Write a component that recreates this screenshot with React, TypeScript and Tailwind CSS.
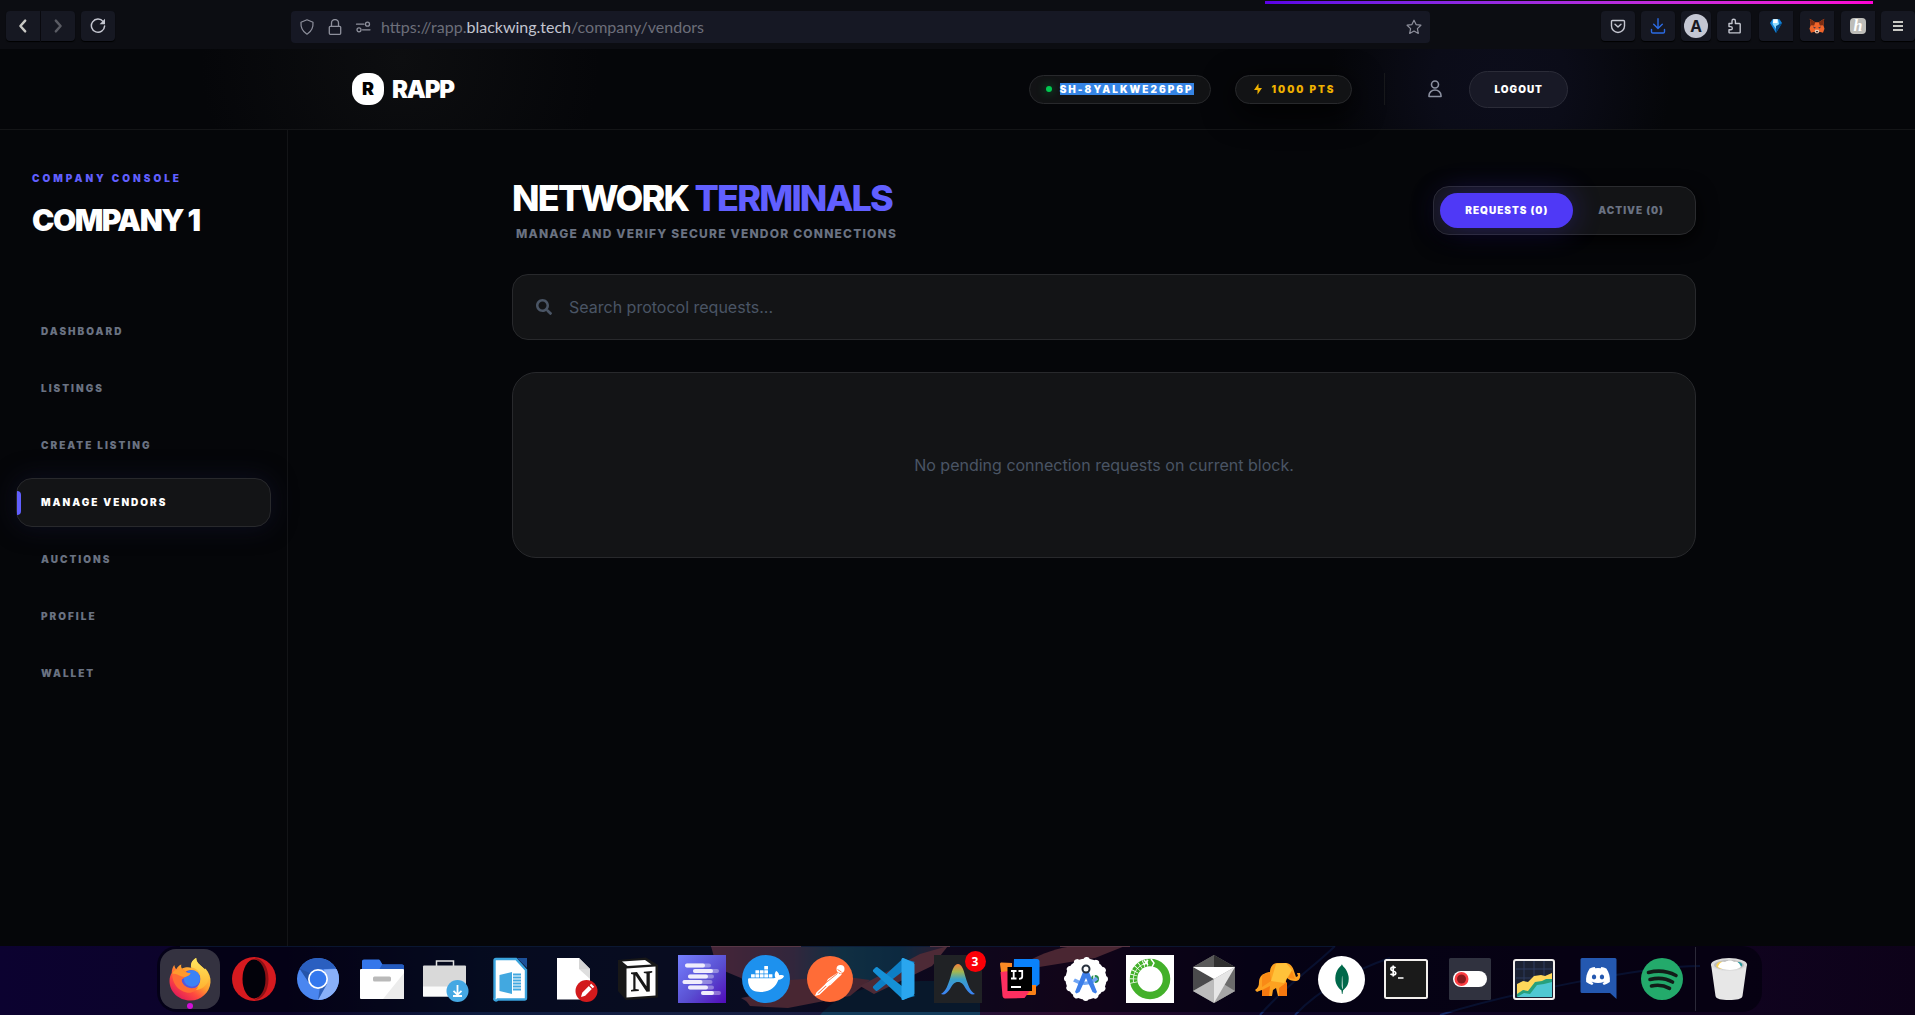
import type { ReactNode } from "react";
import { RiFlashlightFill } from "react-icons/ri";
import { FaDiscord, FaSearch } from "react-icons/fa";
import { SiDocker, SiMongodb } from "react-icons/si";

/* ---------- Browser toolbar ---------- */

function ToolButton({ label, className = "w-[34px] rounded", children }: { label: string; className?: string; children: ReactNode }) {
  return (
    <button
      type="button"
      aria-label={label}
      className={`flex h-[30px] shrink-0 items-center justify-center bg-[#161822] shadow-[0_1px_1px_#000] ${className}`}
    >
      {children}
    </button>
  );
}

function Line({ d, className, width = 1.4, size = "size-4" }: { d: string; className: string; width?: number; size?: string }) {
  return (
    <svg viewBox="0 0 16 16" className={`${size} shrink-0 ${className}`} fill="none" stroke="currentColor" strokeWidth={width} strokeLinecap="round" strokeLinejoin="round" aria-hidden="true">
      <path d={d} />
    </svg>
  );
}

function BrowserBar() {
  return (
    <div className="relative flex h-[49px] items-start bg-[#0c0d12] pt-[11px] pl-1.5">
      <div className="absolute top-px right-[42px] h-[3px] w-[608px] bg-linear-to-r from-[#5b00e6] to-[#ff00d4]" />
      <div className="flex gap-px">
        <ToolButton label="Back" className="w-[34px] rounded-l">
          <Line d="M10.2 2.6 5.4 8l4.8 5.4" width={2.4} className="text-[#c8c8c4]" />
        </ToolButton>
        <ToolButton label="Forward" className="w-[34px] rounded-r">
          <Line d="M5.8 2.6 10.6 8l-4.8 5.4" width={2.4} className="text-[#5a5c64]" />
        </ToolButton>
      </div>
      <div className="ml-1.5">
        <ToolButton label="Reload">
          <svg viewBox="0 0 16 16" className="size-4 text-[#c4c6d0]" fill="none" stroke="currentColor" strokeWidth="1.5" aria-hidden="true">
            <path d="M13.2 3.6A6.6 6.6 0 1 0 14.6 8" strokeLinecap="round" />
            <path d="M15 .8v5.4H9.6z" fill="currentColor" stroke="none" />
          </svg>
        </ToolButton>
      </div>
      <div className="ml-44 flex h-8 flex-1 items-center rounded bg-[#161824] px-2 text-[#8e909c]">
        <Line d="M8 .8 14 3.2c.4 4.6-1.2 9-6 12C3.200 12.200 1.600 7.800 2 3.200z" width={1.200} className="" />
        <svg viewBox="0 0 16 16" className="ml-3 size-4 shrink-0" fill="none" stroke="currentColor" strokeWidth="1.300" aria-hidden="true">
          <rect x="2.300" y="7.300" width="11.400" height="8" rx="1" />
          <path d="M4.500 7V4a3.500 3.500 0 0 1 7 0v3" />
        </svg>
        <svg viewBox="0 0 16 16" className="ml-3 size-4 shrink-0" fill="none" stroke="currentColor" strokeWidth="1.300" strokeLinecap="round" aria-hidden="true">
          <path d="M1.500 5.200h7.500M7.500 10.800H15" />
          <circle cx="12.500" cy="5.200" r="2" />
          <circle cx="4" cy="10.800" r="2" />
        </svg>
        <div
          role="textbox"
          aria-label="Address"
          tabIndex={0}
          className="ml-2.5 flex-1 font-[Lato,sans-serif] text-base leading-6 whitespace-nowrap text-[#6c6e79]"
        >
          https://rapp.<span className="text-[#c3c5d0]">blackwing.tech</span>/company/vendors
        </div>
        <button type="button" aria-label="Bookmark this page" className="text-[#8e909c]">
          <Line d="M8 1.200 10.100 5.600l4.800.6-3.500 3.400.9 4.800L8 12l-4.300 2.400.9-4.800L1.100 6.200l4.800-.6z" width={1.200} className="" />
        </button>
      </div>
      <div className="ml-[171px] flex items-start gap-1.5 text-[#c4c6d0]">
        <ToolButton label="Pocket">
          <Line d="M2.500 2.500h11a1 1 0 0 1 1 1V8a6.500 6.500 0 0 1-13 0V3.500a1 1 0 0 1 1-1zM5 6.200l3 2.900 3-2.900" className="" />
        </ToolButton>
        <ToolButton label="Downloads">
          <Line d="M8 .8v9.400M3.700 6.200 8 10.400l4.300-4.200M1.500 11.500v2.200c0 .9.400 1.300 1.300 1.300h10.400c.9 0 1.300-.4 1.300-1.300v-2.200" className="text-[#2b6be4]" />
        </ToolButton>
        <ToolButton label="Account" className="w-[30px] rounded">
          <span className="flex size-6 items-center justify-center rounded-full bg-[#c4c7d3] font-['Noto_Sans',sans-serif] text-base font-bold text-[#161822]">A</span>
        </ToolButton>
        <ToolButton label="Extensions">
          <Line d="M3 5.500h3V3a1.700 1.700 0 0 1 3.400 0v2.500h4.100a.7.700 0 0 1 .7.700v8a.7.700 0 0 1-.7.700H3.700a.7.700 0 0 1-.7-.7V11.800h1.700a1.600 1.600 0 0 0 0-3.200H3z" className="" />
        </ToolButton>
        <div className="ml-0.5 flex gap-[7px]">
          <ToolButton label="Diamond extension" className="w-[34px] rounded-l">
            <svg viewBox="0 0 16 16" className="size-4" aria-hidden="true">
              <path d="M2 5 4.500 1.200h7L14 5 8 15z" fill="#1181d8" />
              <path d="M5 1.200h5L11 6 8 11 4.600 6z" fill="#8fdcff" />
              <path d="M5.500 1.200h4L9.500 5H5z" fill="#fff" />
              <path d="M14 5 8 15V8z" fill="#064a86" />
            </svg>
          </ToolButton>
          <ToolButton label="Fox extension" className="w-[34px] rounded-l">
            <svg viewBox="0 0 16 16" className="size-4" aria-hidden="true">
              <path d="m.8.8 5.400 3.400h3.600L15.200.8l-.8 6.400 1.100 3.600-1.500 4-3.600-1-1.200 1.400H6.800l-1.200-1.400-3.600 1-1.500-4 1.100-3.600z" fill="#f0642a" />
              <path d="m.8.8 5.400 3.400-1 3.200-3.600-.2zM15.200.8 9.800 4.200l1 3.200 3.600-.2z" fill="#7c2d12" />
              <path d="M4 8.600 7 9.800l-1.800.8zM12 8.600 9 9.800l1.800.8zM6.500 12.800h3l.3 2H6.200z" fill="#2a3550" />
              <path d="m5.600 13.800 1.200 1.400h2.400l1.200-1.400-.6-2H6.200z" fill="#e8c9b4" />
              <path d="M7 13h2l-.3 1.200H7.300z" fill="#222" />
            </svg>
          </ToolButton>
          <ToolButton label="Honey extension" className="w-[34px] rounded-l">
            <span className="flex size-4 items-center justify-center rounded-sm bg-[#bdbdb9] font-['Liberation_Serif',serif] text-base leading-none font-bold text-white italic">h</span>
          </ToolButton>
        </div>
        <ToolButton label="Menu">
          <svg viewBox="0 0 10 10" className="size-2.5 text-[#c8c8c4]" fill="currentColor" aria-hidden="true">
            <path d="M0 0h10v2H0zM0 4h10v2H0zM0 8h10v2H0z" />
          </svg>
        </ToolButton>
      </div>
    </div>
  );
}

/* ---------- Site ---------- */

function SiteHeader() {
  return (
    <header className="border-b border-[#141517] bg-[radial-gradient(circle_at_400px_10px,#0d0e10_0,transparent_200px),radial-gradient(ellipse_170px_170px_at_1500px_34px,#0c0d1b_0,#0b0c18_40%,transparent_100%)] pl-[5px]">
      <div className="mx-auto flex h-20 max-w-7xl items-center justify-between px-8">
        <a href="#home" className="flex items-center gap-2">
          <span className="flex size-8 items-center justify-center rounded-[14px] bg-white text-lg font-black text-black">R</span>
          <span className="pt-0.5 text-2xl font-black tracking-tighter text-white">RAPP</span>
        </a>
        <div className="flex items-center gap-6">
          <div className="flex items-center gap-2 rounded-full border border-[#28292c] bg-[#121315] px-4 py-1.5 text-[10px] leading-[15px] font-black tracking-[0.2em] text-white">
            <span className="size-1.5 rounded-full bg-[#00c950] shadow-[0_0_10px_#00c950aa]" />
            <span>
              <span className="bg-[#3584e4]">SH-8YALKWE26P6P</span>
            </span>
          </div>
          <div className="flex items-center gap-2 rounded-full border border-[#28292c] bg-[#121315] px-4 py-1.5 text-[10px] leading-[15px] font-black tracking-[0.2em] text-[#efb100] shadow-[0_8px_32px_#000]">
            <RiFlashlightFill className="text-xs" />
            1000 PTS
          </div>
          <div className="ml-2 h-8 w-px bg-[#17181b]" />
          <div className="ml-2 flex items-center gap-4">
            <button type="button" aria-label="Profile" className="p-2 text-[#8b90a0]">
              <svg viewBox="0 0 20 20" className="size-5" fill="none" stroke="currentColor" strokeWidth="1.600" strokeLinejoin="round" aria-hidden="true">
                <circle cx="10" cy="5.500" r="3.500" />
                <path d="M4 17.500v-1a6 5.500 0 0 1 12 0v1z" />
              </svg>
            </button>
            <button type="button" className="rounded-full border border-[#2b2c38] bg-[#181926] px-6 py-2.5 text-[10px] leading-[15px] font-black tracking-widest text-white">
              LOGOUT
            </button>
          </div>
        </div>
      </div>
    </header>
  );
}

const links = ["DASHBOARD", "LISTINGS", "CREATE LISTING", "MANAGE VENDORS", "AUCTIONS", "PROFILE", "WALLET"];

function Sidebar() {
  return (
    <aside className="w-72 shrink-0 border-r border-[#131417] px-4 pt-[41px]">
      <div className="px-4">
        <p className="text-[10px] leading-[15px] font-black tracking-[0.3em] text-[#615fff]">COMPANY CONSOLE</p>
        <h2 className="mt-4 text-3xl leading-9 font-black tracking-tighter text-white">COMPANY 1</h2>
      </div>
      <nav className="mt-[69px] flex flex-col gap-2">
        {links.map((label) =>
          label === "MANAGE VENDORS" ? (
            <a
              key={label}
              href="#vendors"
              aria-current="page"
              className="relative rounded-2xl border border-[#28292c] bg-[#131416] px-6 py-4 text-[10px] leading-[15px] font-black tracking-[0.2em] text-white shadow-[0_0_24px_#0d0f20] before:absolute before:top-3 before:left-0 before:h-6 before:w-1 before:rounded-r-full before:bg-[#615fff]"
            >
              {label}
            </a>
          ) : (
            <a key={label} href={`#${label.toLowerCase()}`} className="border border-transparent px-6 py-4 text-[10px] leading-[15px] font-black tracking-[0.2em] text-[#6a7282]">
              {label}
            </a>
          )
        )}
      </nav>
    </aside>
  );
}

function Vendors() {
  return (
    <main className="min-w-0 flex-1 pl-[5px]">
      <div className="mx-auto flex max-w-7xl flex-col gap-8 p-12">
        <div className="flex items-center justify-between">
          <div>
            <h1 className="text-4xl leading-10 font-extrabold tracking-tighter text-white">
              NETWORK <span className="text-[#615fff]">TERMINALS</span>
            </h1>
            <p className="mt-2 ml-1 text-xs leading-4 font-extrabold tracking-widest text-[#6a7282]">MANAGE AND VERIFY SECURE VENDOR CONNECTIONS</p>
          </div>
          <div className="flex rounded-2xl border border-[#2a2b2e] bg-[#131416] p-1.5 text-[10px] leading-[15px] font-black tracking-widest shadow-[0_6px_20px_#000]">
            <button type="button" className="rounded-full bg-[#4f39f6] px-[25px] py-2.5 text-white shadow-[0_0_30px_#4f39f650]">
              REQUESTS (0)
            </button>
            <button type="button" className="rounded-full px-[25px] py-2.5 text-[#6a7282]">
              ACTIVE (0)
            </button>
          </div>
        </div>
        <div className="relative">
          <FaSearch className="absolute top-1/2 left-6 -translate-y-1/2 text-base text-[#4a5565]" aria-hidden="true" />
          <input
            type="text"
            aria-label="Search protocol requests"
            placeholder="Search protocol requests..."
            className="block w-full rounded-2xl border border-[#28292c] bg-[#131416] py-5 pr-6 pl-14 text-base leading-6 text-white outline-none placeholder:text-[#4a5565]"
          />
        </div>
        <div className="rounded-3xl border border-[#28292c] bg-[#131416] px-8 py-20 text-center text-base leading-6 text-[#4a5565]">
          No pending connection requests on current block.
        </div>
      </div>
    </main>
  );
}

/* ---------- Dock ---------- */

function Art({ children }: { children: ReactNode }) {
  return (
    <svg viewBox="0 0 48 48" className="size-12" aria-hidden="true">
      {children}
    </svg>
  );
}

const Firefox = () => (
  <Art>
    <defs>
      <linearGradient id="ffBody" x1="0.850" y1="0.100" x2="0.200" y2="0.950">
        <stop offset="0" stopColor="#ffe14d" />
        <stop offset="0.450" stopColor="#ff9a2e" />
        <stop offset="0.700" stopColor="#ff4a3f" />
        <stop offset="1" stopColor="#e0195a" />
      </linearGradient>
      <linearGradient id="ffFlame" x1="0" y1="0" x2="0" y2="1">
        <stop offset="0" stopColor="#ffe860" />
        <stop offset="1" stopColor="#ffb02e" />
      </linearGradient>
    </defs>
    <path d="M8.300 10c.3 2 1 3.200 2 4.200 1-2 2.600-3.600 5-4.600-.4 1.600-.2 2.800.6 4 3.600-1.600 7-1.600 9.500-.8C24.500 8 26.500 5 30.200 3c.2 4 2.500 5.800 5.500 8.400 1.300 1 2 2.200 2.300 3.600l1.500-1.500c3.600 4.400 5.500 9 5 14C43.500 37.800 35 45.500 24.300 45.500 12.500 45.500 3.500 36.500 3.500 26c0-3.500 1-6 2.200-8 .1-3 .8-5.700 2.600-8z" fill="url(#ffBody)" />
    <circle cx="25" cy="24.500" r="9.500" fill="#5a55d8" />
    <circle cx="26" cy="23.500" r="8.200" fill="#3b82f6" />
    <path d="M30.200 3c-3.700 2-5.700 5-5.200 9.500 6 .5 9.500 4.500 9.500 11 0 6-3.500 10-9 11.500 9.500 1 16-4 17.500-12-1-5.500-3-8.500-7.300-11.600C32.700 8.800 30.400 7 30.200 3z" fill="url(#ffFlame)" />
    <path d="M6 19c2.500-4.500 6.500-5.500 11-4.500 1.500 2.500 4 3.700 7.500 3.800-.5 2-3 3-5.500 3.700-1 1.200-2.500 1.500-3.500 3 .5 4 4 7 8.500 8 4 .7 6.500-.5 8-1.500-1.500 5-6.500 7-11.500 6C11.500 35.500 6.500 28 6 19z" fill="#ff6b35" />
    <path d="M6 18.500c2.800-4.400 6.700-5 11-4 1.500 2.500 4 3.700 7.500 3.800-.5 2-3 3-5.500 3.700-3.500.2-8-3.500-13-3.500z" fill="#ff9a2e" />
  </Art>
);

const Opera = () => (
  <Art>
    <ellipse cx="24" cy="24" rx="22" ry="22" fill="#d61a1f" />
    <path d="M24 3c8.500 0 14.500 9 14.500 21S32.500 45 24 45c5.500-1.500 9-10 9-21S29.500 4.500 24 3z" fill="#8e1115" />
    <ellipse cx="24" cy="24" rx="11.500" ry="19.500" fill="#02020a" />
  </Art>
);

const Chromium = () => (
  <Art>
    <circle cx="24" cy="24" r="21" fill="#4a86f0" />
    <path d="M24 3a21 21 0 0 1 18.200 10.500L24 14.500 14.500 27 5.500 13.500A21 21 0 0 1 24 3z" fill="#2a5fc0" />
    <path d="M42.500 14A21 21 0 0 1 24 45l9.500-17.500L30 14.500z" fill="#89b0f8" />
    <path d="M5.500 13.500 15 28l3-9zM24 45l9-16-7 3z" fill="#2350a0" opacity=".7" />
    <circle cx="24" cy="24" r="10" fill="#fff" />
    <circle cx="24" cy="24" r="8.300" fill="#3478ee" />
  </Art>
);

const Files = () => (
  <Art>
    <path d="M4 6.500C4 5.200 4.700 4.500 6 4.500h14c1.500 0 2 .5 3 2.500l1.500 2.500H44a2 2 0 0 1 2 2V20H4z" fill="#3577ea" />
    <path d="M24 9.500h20a2 2 0 0 1 2 2V15H21z" fill="#245bbf" />
    <rect x="2" y="14" width="44" height="30" rx="1" fill="#fff" />
    <path d="M46 18v26H25z" fill="#ececec" />
    <rect x="15" y="21.500" width="18" height="5" rx="1.500" fill="#b9b9b9" />
  </Art>
);

const Software = () => (
  <Art>
    <path d="M14.500 11V6h17v5" fill="none" stroke="#e2e2e2" strokeWidth="1.500" />
    <rect x="1" y="10.500" width="43" height="31" rx="1" fill="#d9d9d9" />
    <path d="M1 31.500h43v10H1z" fill="#fafafa" />
    <circle cx="35.500" cy="36" r="11" fill="#45a8e3" />
    <path d="M35.500 30v9.500M31.500 35.800l4 4 4-4M31 41h9" fill="none" stroke="#fff" strokeWidth="1.800" />
  </Art>
);

const Writer = () => (
  <Art>
    <path d="M31 3h10v10z" fill="#1c5199" />
    <path d="M10 4h20l10 11v28a1.500 1.500 0 0 1-1.500 1.500h-27A1.500 1.500 0 0 1 8.500 43V5.500A1.500 1.500 0 0 1 10 4z" fill="#fff" stroke="#3ba4de" strokeWidth="2.400" />
    <path d="m13.500 20 12.500-3v22l-12.500-3z" fill="#42a8e0" />
    <path d="M27 19.500h8M27 22.500h8M27 25.500h8M27 28.500h8M27 31.500h8M27 34.500h8" stroke="#42a8e0" strokeWidth="1.800" />
  </Art>
);

const Editor = () => (
  <Art>
    <path d="M7 3h22l11 11v30.500H7z" fill="#fff" />
    <path d="M29 3v11h11z" fill="#d5d5d5" />
    <path d="m29 14 11 10V14z" fill="#dedede" />
    <circle cx="36.500" cy="36" r="11" fill="#d21a1c" />
    <path d="m31 42 1.200-4.300 6.600-6.600 3 3-6.600 6.600zM39.700 30.200l1.500-1.400 3 3-1.500 1.400z" fill="#fff" />
  </Art>
);

const Notion = () => (
  <Art>
    <path d="M4 5 32 2.500 44 10v32.500L12 45 4 36z" fill="#181818" />
    <path d="m8 6.500 23-1.600 6.500 4.600-24 1.500z" fill="#fff" />
    <path d="m12.500 13.500 29-2v29l-29 2z" fill="#fff" />
    <path d="m17 17.500 6-.4 9.500 14.200V18.500l-2.700-.6v-1.200l8.400-.6v1.400l-2.400.7v18.300l-3.300.3-11-16.500v13.600l3.300.6V36l-7.800.5v-1.400l2.300-.7V19.600l-2.300-.7z" fill="#181818" />
  </Art>
);

const Bars = () => (
  <Art>
    <defs>
      <linearGradient id="barsBg" x1="0" y1="0" x2="1" y2="1">
        <stop offset="0" stopColor="#7580ff" />
        <stop offset="0.550" stopColor="#5a50d2" />
        <stop offset="1" stopColor="#500ab8" />
      </linearGradient>
    </defs>
    <path d="M0 0h48v48H0z" fill="url(#barsBg)" />
    <g stroke="#fff" strokeOpacity=".35" strokeWidth="4" strokeLinecap="round">
      <path d="M9 10.500h22M17 16h22M12 21.500h22M6.500 27h26M12 32.500h22M25 38h16" />
    </g>
    <g stroke="#efedfc" strokeWidth="4" strokeLinecap="round">
      <path d="M9 10.500h16M17 16h16M12 21.500h16M6.500 27h16M12 32.500h16M25 38h9" />
    </g>
  </Art>
);

const Docker = () => (
  <span className="flex size-12 items-center justify-center rounded-full bg-[#1d91ee] text-4xl text-white">
    <SiDocker />
  </span>
);

const Postman = () => (
  <Art>
    <circle cx="24" cy="24" r="23" fill="#ff6c37" />
    <circle cx="34.500" cy="14" r="4" fill="#fff" />
    <path d="M32 17.500 22 24l-3 6 2 1 14-11z" fill="#fff" />
    <path d="m20 29.500-9 8.500-.8 1.800 3-.8 9-8.500zM35.500 18.500 24 29.500l-3.500.8" fill="none" stroke="#fff" strokeWidth="1.500" />
    <path d="m19.500 28 12-9.500M31.500 14.500l4 2.500" stroke="#ff6c37" strokeWidth=".9" />
  </Art>
);

const VsCode = () => (
  <Art>
    <path d="M33 3.500 3.500 31c-.8.8-.8 1.700 0 2.500l2 2c.8.700 1.500.7 2.300.1L45 7z" fill="#0d7fc6" />
    <path d="M33 44.500 3.500 17c-.8-.8-.8-1.700 0-2.500l2-2c.8-.7 1.500-.7 2.300-.1L45 41z" fill="#1590d6" />
    <path d="m33.500 3 9.500 4.500c1 .5 1.500 1.200 1.500 2.300v28.400c0 1-.5 1.800-1.500 2.300L33.500 45c-1.300.3-2-.3-2-1.500v-39c0-1.200.7-1.800 2-1.500z" fill="#2aa6ee" />
  </Art>
);

const Arc = () => (
  <>
    <Art>
      <defs>
        <linearGradient id="arcFill" x1="0" y1="0" x2="0" y2="1">
          <stop offset="0" stopColor="#f5803a" />
          <stop offset="0.250" stopColor="#a4b850" />
          <stop offset="0.500" stopColor="#3aa2c8" />
          <stop offset="1" stopColor="#3b82f6" />
        </linearGradient>
      </defs>
      <path d="M0 0h48v48H0z" fill="#202225" />
      <path d="M7 39c5-3 7-9 9.500-17C18.500 14 20.500 9 24 9s5.500 5 7.500 13c2.500 8 4.500 14 9.500 17-3 1.500-6-.5-9-5-2.500-4.500-4.500-7-8-7s-5.500 2.500-8 7c-3 4.500-6 6.500-9 5z" fill="url(#arcFill)" />
    </Art>
    <span className="absolute -top-1 -right-1 flex size-[21px] items-center justify-center rounded-full bg-[#fb0007] font-['Noto_Sans',sans-serif] text-xs font-bold text-white">3</span>
  </>
);

const Idea = () => (
  <Art>
    <path d="M2 9c0-1 .7-1.500 1.500-1.500L14 8v28l-8 3z" fill="#fb8a24" />
    <path d="M16 4h23c1.500 0 2.500 1 2.500 2.500V29L34 35H15z" fill="#0a82fb" />
    <path d="M26 30h12v8.500c0 .9-.6 1.500-1.500 1.500H26z" fill="#f98017" />
    <path d="m2.500 17 9-1V35h21l-6 8L7 43.500C5.500 43.500 5 42.500 4.500 41z" fill="#fd2f60" />
    <path d="M9.500 12H34v24H9.500z" fill="#000" />
    <path d="M13 16h5.500M15.700 16v7M13 23.500h5.500M20.500 16h3.700v5.500c0 1.500-.8 2.300-3.200 2.300M13 32h10" fill="none" stroke="#fff" strokeWidth="1.800" />
  </Art>
);

const AndroidStudio = () => (
  <Art>
    <circle cx="24" cy="24" r="20.500" fill="#fff" />
    <circle cx="24" cy="24" r="19" fill="none" stroke="#fff" strokeWidth="6" strokeDasharray="0.100 9.850" strokeLinecap="round" />
    <circle cx="33" cy="24" r="4" fill="#288c50" />
    <path d="M32 19v10" stroke="#fff" strokeWidth="1.500" />
    <path d="M12 25c8 5 17 4 23-2" fill="none" stroke="#6fa5f5" strokeWidth="3.500" />
    <path d="M21 17h6l8 20-1.500 1.500-3-1.500L24 23l-6.500 14-3 1.500L13 37z" fill="#3d7ee8" />
    <circle cx="24" cy="14" r="3.500" fill="#fff" stroke="#27303d" strokeWidth="2" />
  </Art>
);

const Loop = () => (
  <Art>
    <path d="M0 0h48v48H0z" fill="#fff" />
    <circle cx="24" cy="24" r="16.500" fill="none" stroke="#43b02a" strokeWidth="7.500" />
    <path d="M7.500 28A16.500 16.500 0 0 1 22 8" fill="none" stroke="#fff" strokeWidth="7.500" strokeDasharray=".8 3" />
    <path d="M7.500 27A16.500 16.500 0 0 1 22 8" fill="none" stroke="#fff" strokeWidth=".8" />
    <path d="m18 5 4 5M22 5l-4 5M25 4l3 4-2 4" fill="none" stroke="#fff" strokeWidth="1.500" />
  </Art>
);

const Cube = () => (
  <Art>
    <path d="m24 0 21 12v24L24 48 3 36V12z" fill="#777" />
    <path d="M24 0 3 12h21z" fill="#5a5a5a" />
    <path d="m24 0 21 12H24z" fill="#303030" />
    <path d="M3 12v24l21-12z" fill="#4a4a4c" />
    <path d="M3 36 24 24v24z" fill="#bcbcbc" />
    <path d="M45 12v24L24 48z" fill="#6b6b6b" />
    <path d="m45 36-13-8-8 20z" fill="#a5a5a5" />
    <path d="M45 12 24 48V24z" fill="#e6e6e6" />
    <path d="M3 12h42L24 24z" fill="#fff" />
  </Art>
);

const Elephant = () => (
  <Art>
    <path d="M8 20c3-2 6-3 8-3 0-5 3-9 7-9h9c4 0 7 4 8 8l2 6 2-1-1-3h3c1 5-1 8-5 8-3 0-6-1-8-3l-1 3v15h-8l-2-8-3 2-1 6H8v-6c-1 0-3 1-5 2l-2-2c3-2 4-4 4-8 0-3 1-5 3-7z" fill="#fda221" />
    <path d="m22 9 10-1 6 7-8 13-13-2z" fill="#ffc23a" />
    <path d="m8 20 8-3 1 9-9 6zM38 16l3 8-7-1z" fill="#f98a16" />
    <path d="M8 35l8-4-1 10H8zM25 33l8-6v14h-8z" fill="#f5780f" />
  </Art>
);

const Mongo = () => (
  <span className="flex size-[47px] items-center justify-center rounded-full bg-white text-[30px] text-[#00684a]">
    <SiMongodb />
  </span>
);

const Terminal = () => (
  <Art>
    <rect x="3" y="5" width="42" height="38" rx="1.500" fill="#1a1a1a" stroke="#f2efed" strokeWidth="2" />
    <path d="M13.500 13c-1-1.300-4.700-1.200-4.700.9 0 2.700 5 1.400 5 4.200 0 2.300-4.200 2.300-5.300.7M11.200 10.500v11M16 23h5.500" fill="none" stroke="#fff" strokeWidth="1.700" />
  </Art>
);

const Tweaks = () => (
  <Art>
    <rect x="3" y="3" width="42" height="42" rx="1.500" fill="#30323f" />
    <rect x="7" y="16" width="34" height="16" rx="8" fill="#fff" />
    <circle cx="15.500" cy="24" r="7" fill="#fc3d42" />
    <circle cx="15.500" cy="24" r="4.500" fill="#8a1a1e" />
  </Art>
);

const Monitor = () => (
  <Art>
    <rect x="4" y="5" width="40" height="39" rx="2" fill="#1c2233" stroke="#f2efed" strokeWidth="2" />
    <path d="M14 6v36M24 6v36M34 6v36M6 14h36M6 23h36" stroke="#2d3a5e" strokeWidth="1" />
    <path d="m7 29 6-3 5 1 6-6 7-1 4 1 7-3v10L7 42z" fill="#ffd75a" />
    <path d="m7 39 6-4 5 1 7-9 7-1 4-2h6v18H7z" fill="#27a07c" />
    <path d="m7 42 7-4 6 1 7-9 7-1 8-2v15z" fill="#4fc8d2" />
  </Art>
);

const Discord = () => (
  <span className="relative flex size-12 justify-center text-white">
    <svg viewBox="0 0 48 48" className="absolute inset-0 size-12" aria-hidden="true">
      <path d="M8 3h33a1.500 1.500 0 0 1 1.500 1.500V44L36 38H8a1.500 1.500 0 0 1-1.500-1.500v-32A1.500 1.500 0 0 1 8 3z" fill="#2458b0" />
    </svg>
    <FaDiscord className="relative mt-2 text-[26px]" />
  </span>
);

const Spotify = () => (
  <Art>
    <circle cx="24" cy="24" r="21" fill="#23aa6b" />
    <path d="M10.500 17.500c9.500-2.500 19-1.500 27.500 3M12 24.500c8-2 15.500-1.500 22.500 2.500M13.500 31c6.500-1.500 12-1 18 2.300" fill="none" stroke="#121c18" strokeWidth="3.600" strokeLinecap="round" />
  </Art>
);

const Trash = () => (
  <Art>
    <path d="M6 9h36l-4.500 32c-.4 3-6 4-13.500 4s-13-1-13.500-4z" fill="#e7e7e7" />
    <ellipse cx="24" cy="9.500" rx="18" ry="6.500" fill="#dcdcdc" />
    <ellipse cx="24" cy="10" rx="15" ry="5" fill="#bdbdbd" />
    <path d="M11 11c1-4 4-5 7-4l-1 7c-3-.5-5-1.500-6-3z" fill="#fad45a" />
    <path d="M33 7c3 0 5 2 4 4l-4 2z" fill="#2a9aa0" />
    <path d="M13 12c1-3 3-6 7-5 3-2 7-2 9 0 4-1 6 2 7 5-5 4-17 4-23 0z" fill="#fff" />
  </Art>
);

const apps: [string, () => ReactNode][] = [
  ["Opera", Opera],
  ["Chromium", Chromium],
  ["Files", Files],
  ["Software", Software],
  ["Writer", Writer],
  ["Text Editor", Editor],
  ["Notion", Notion],
  ["Gantt", Bars],
  ["Docker", Docker],
  ["Postman", Postman],
  ["Visual Studio Code", VsCode],
  ["Antigravity", Arc],
  ["IntelliJ IDEA", Idea],
  ["Android Studio", AndroidStudio],
  ["Anaconda", Loop],
  ["Cursor", Cube],
  ["TablePlus", Elephant],
  ["MongoDB Compass", Mongo],
  ["Terminal", Terminal],
  ["Tweaks", Tweaks],
  ["System Monitor", Monitor],
  ["Discord", Discord],
  ["Spotify", Spotify],
];

function DockItem({ label, children }: { label: string; children: ReactNode }) {
  return (
    <button type="button" aria-label={label} className="flex h-[65px] w-16 shrink-0 items-center justify-center">
      <span className="relative flex items-center justify-center">{children}</span>
    </button>
  );
}

function Wallpaper() {
  return (
    <svg viewBox="0 0 1915 69" preserveAspectRatio="none" className="absolute inset-0 h-full w-full" aria-hidden="true">
      <defs>
        <linearGradient id="wallBase">
          <stop offset="0" stopColor="#0c0230" />
          <stop offset="0.150" stopColor="#0c0428" />
          <stop offset="0.250" stopColor="#0e1c40" />
          <stop offset="0.400" stopColor="#182044" />
          <stop offset="0.560" stopColor="#2c0c30" />
          <stop offset="0.660" stopColor="#0e0626" />
          <stop offset="0.900" stopColor="#10031f" />
          <stop offset="1" stopColor="#0d0219" />
        </linearGradient>
        <linearGradient id="wallTeal">
          <stop offset="0" stopColor="#b05c7c" />
          <stop offset="0.350" stopColor="#7c6088" />
          <stop offset="0.550" stopColor="#2a7698" />
          <stop offset="0.800" stopColor="#1f6690" />
          <stop offset="1" stopColor="#7c4666" />
        </linearGradient>
      </defs>
      <path d="M0 0h1915v69H0z" fill="url(#wallBase)" />
      <path d="M820 69c20-24 60-34 110-34h50v34z" fill="#143c5c" />
      <path d="M711 0h236l-38 24-60 20-60 14-38 0-10-6 20-4-20-16-24-10z" fill="url(#wallTeal)" />
      <path d="m790 34 50-4 30 4-20 16-62 12-38-2-6-8 30-2z" fill="#b35f6e" />
      <path d="M860 40 920 8l28-8-16 20-58 28z" fill="#c06a78" />
      <path d="M1030 14c20-10 35-14 50-14h45l-30 12-62 10z" fill="#b8606e" />
      <path d="M1335 0c-20 20-50 40-75 69M1390 12c-30 10-70 30-95 57M1700 20c-60 0-200 30-260 49" fill="none" stroke="#152a68" strokeWidth="2" />
      <path d="M180 0h1155" stroke="#21457e" strokeWidth="1.500" />
      <path d="M711 0h90M930 0h20M1060 0h70" stroke="#d98ba0" strokeWidth="2" />
    </svg>
  );
}

function Dock() {
  return (
    <footer className="relative flex h-[69px] shrink-0 items-start justify-center overflow-hidden pl-[3px]">
      <Wallpaper />
      <div className="relative flex h-[66px] items-center rounded-[20px] bg-[#00000a]/60 px-px">
        <button type="button" aria-label="Firefox" className="relative mx-0.5 flex size-[60px] items-center justify-center rounded-2xl bg-[#343240]">
          <Firefox />
          <span className="absolute bottom-0 size-1.5 rounded-full bg-[#d010d8]" />
        </button>
        {apps.map(([label, Icon]) => (
          <DockItem key={label} label={label}>
            <Icon />
          </DockItem>
        ))}
        <div className="mx-px h-16 w-px bg-[#2b2938]" />
        <DockItem label="Trash">
          <Trash />
        </DockItem>
      </div>
    </footer>
  );
}

export default function App() {
  return (
    <div className="flex min-h-screen flex-col bg-[#050609] font-[Inter,sans-serif]">
      <BrowserBar />
      <SiteHeader />
      <div className="flex flex-1">
        <Sidebar />
        <Vendors />
      </div>
      <Dock />
    </div>
  );
}
